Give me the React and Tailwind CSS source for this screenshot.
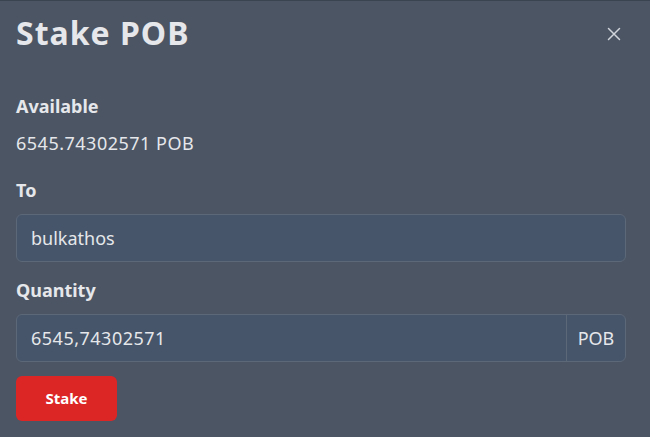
export default function App() {
  return (
    <div
      className="w-[650px] h-[437px] bg-[#4b5563] border-t border-[#3a4350] text-[#e5e7eb] pl-4 pr-6 overflow-hidden"
      style={{ fontFamily: '"Noto Sans", sans-serif' }}
    >
      <div className="flex items-center justify-between h-[64px]">
        <h2 className="text-[32px] font-bold leading-none tracking-[1px]">Stake POB</h2>
        <button className="mr-[5px] mt-px text-[#d1d5db]">
          <svg width="14" height="14" viewBox="0 0 14 14" fill="none" stroke="currentColor" strokeWidth="1.5" strokeLinecap="round">
            <path d="M1.5 1.5 L12.5 12.5 M12.5 1.5 L1.5 12.5" />
          </svg>
        </button>
      </div>

      <div className="mt-[29px] text-[18px] font-bold leading-6">Available</div>
      <div className="mt-[13px] text-[18px] leading-6 tracking-[0.5px]">6545.74302571 POB</div>

      <div className="mt-[23px] text-[18px] font-bold leading-6">To</div>
      <input
        className="mt-[12px] block w-full h-[48px] rounded-md bg-[#465569] border border-[#5c6778] px-[14px] text-[18px] text-[#e5e7eb] outline-none"
        defaultValue="bulkathos"
      />

      <div className="mt-[16px] text-[18px] font-bold leading-6">Quantity</div>
      <div className="mt-[12px] flex w-full h-[48px] rounded-md bg-[#465569] border border-[#5c6778]">
        <input
          className="flex-1 min-w-0 bg-transparent px-[14px] text-[18px] tracking-[0.5px] text-[#e5e7eb] outline-none"
          defaultValue="6545,74302571"
        />
        <div className="w-[59px] border-l border-[#5c6778] flex items-center justify-center text-[18px]">POB</div>
      </div>

      <button className="mt-[14px] block w-[101px] h-[45px] rounded-md bg-[#dc2626] text-white text-[15px] font-bold">
        Stake
      </button>
    </div>
  );
}
